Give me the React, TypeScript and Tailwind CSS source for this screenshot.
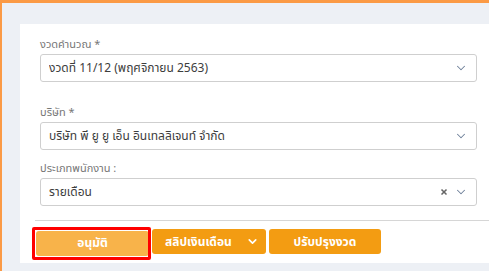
import { ChevronDown, X } from 'lucide-react';

const font = { fontFamily: '"Noto Sans", "Noto Sans Thai", "Noto Sans CJK SC", sans-serif' };

function Field({ label, value, clearable }: { label: string; value: string; clearable?: boolean }) {
  return (
    <div>
      <div className="h-[16px] leading-[16px] text-[11px] text-[#777777] mb-[2px]">{label}</div>
      <div className="h-[28px] border border-[#cfcfcf] rounded-[3px] flex items-center pl-[8px] pr-[8px]">
        <span className="flex-1 text-[12px] text-[#3d3d3d] truncate">{value}</span>
        {clearable && <X className="w-[8px] h-[8px] text-[#666666] mr-[6px]" strokeWidth={5} />}
        <ChevronDown className="w-[14px] h-[14px] text-[#6d7f99]" strokeWidth={1.75} />
      </div>
    </div>
  );
}

export default function App() {
  return (
    <div className="w-[489px] h-[271px] overflow-hidden bg-[#fb9a45] pt-[3px] pl-[2px]" style={font}>
      <div className="h-full bg-[#edf0f5] pt-[21px] pl-[18px]">
        <div className="bg-white h-[239px] pt-[12px] pl-[20px] pr-[12px]">
          <Field label="งวดคำนวณ *" value="งวดที่ 11/12 (พฤศจิกายน 2563)" />
          <div className="mt-[22px]">
            <Field label="บริษัท *" value="บริษัท พี ยู ยู เอ็น อินเทลลิเจนท์ จำกัด" />
          </div>
          <div className="mt-[10px]">
            <Field label="ประเภทพนักงาน :" value="รายเดือน" clearable />
          </div>
          <div className="h-px bg-[#d6d6d6] mt-[14px] -ml-[5px] -mr-[12px]" />
          <div className="flex gap-[3px] mt-[8px] -ml-[4px]">
            <div className="relative">
              <button className="w-[113px] h-[25px] rounded-[3px] bg-[#f8b34a] text-white text-[12px] font-bold">
                อนุมัติ
              </button>
              <div className="absolute -left-[4px] -top-[2px] -right-[2px] -bottom-[4px] border-[3px] border-[#ff0000] rounded-[2px]" />
            </div>
            <div className="w-[114px] h-[25px] rounded-[3px] bg-[#f39c12] text-white flex items-center">
              <span className="flex-1 text-[12px] font-bold text-left pl-[13px]">สลิปเงินเดือน</span>
              <ChevronDown className="w-[13px] h-[13px] mr-[7px]" strokeWidth={3} />
            </div>
            <button className="w-[112px] h-[25px] rounded-[3px] bg-[#f39c12] text-white text-[12px] font-bold">
              ปรับปรุงงวด
            </button>
          </div>
        </div>
      </div>
    </div>
  );
}
